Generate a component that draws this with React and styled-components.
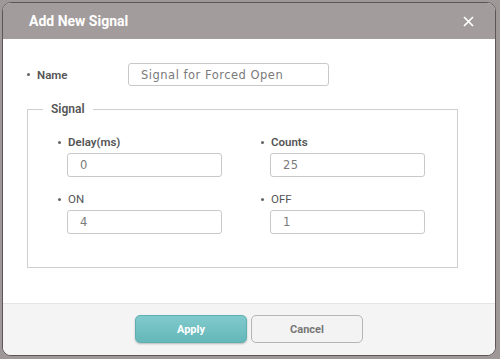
import React from "react";
import styled, { createGlobalStyle } from "styled-components";

const Global = createGlobalStyle`
  html, body {
    margin: 0;
    padding: 0;
    background: #9f9899;
    width: 500px;
    height: 359px;
    overflow: hidden;
  }
  body {
    padding: 2px 4px 0 2px;
    box-sizing: border-box;
  }
`;

const Dialog = styled.div`
  width: 494px;
  height: 354px;
  box-sizing: border-box;
  border: 1.5px solid #5d5557;
  border-radius: 9px;
  overflow: hidden;
  display: flex;
  flex-direction: column;
  background: #fff;
  font-family: Roboto, "Liberation Sans", sans-serif;
`;

const Header = styled.div`
  height: 36px;
  flex: none;
  background: #a39c9d;
  display: flex;
  align-items: center;
  justify-content: space-between;
  padding: 0 21px 0 26px;
`;

const Title = styled.h2`
  margin: 0;
  font-size: 14px;
  font-weight: 700;
  color: #fff;
`;

const Close = styled.button`
  border: 0;
  background: none;
  padding: 0;
  width: 11px;
  height: 11px;
  display: flex;
  cursor: pointer;
`;

const Body = styled.div`
  flex: 1;
  padding: 24px 37px 0 24px;
`;

const Row = styled.div`
  display: flex;
  align-items: center;
`;

const Label = styled.div`
  display: flex;
  align-items: center;
  font-size: 11.5px;
  font-weight: ${(p) => (p.$bold ? 600 : 400)};
  color: #555;
  width: ${(p) => p.$width || "auto"};
  margin-left: ${(p) => p.$indent || "0"};
  &::before {
    content: "";
    width: 3px;
    height: 3px;
    border-radius: 50%;
    background: #666;
    margin-right: 7px;
  }
`;

const Input = styled.input`
  box-sizing: border-box;
  width: ${(p) => p.$width};
  height: ${(p) => p.$height || "24px"};
  border: 1px solid #c9c9c9;
  border-radius: 3px;
  padding: 0 12px;
  font-family: "DejaVu Sans", Verdana, sans-serif;
  font-size: 11.5px;
  letter-spacing: 0.5px;
  color: #7a7a7a;
  background: #fff;
  outline: none;
`;

const Fieldset = styled.fieldset`
  margin: 16px 0 0 0;
  border: 1px solid #cfcfcf;
  padding: 19px 30px 32px 39px;
  height: 166px;
  box-sizing: border-box;
`;

const Legend = styled.legend`
  margin-left: -24px;
  padding: 0 8px;
  font-size: 12px;
  font-weight: 600;
  color: #555;
`;

const Grid = styled.div`
  display: grid;
  grid-template-columns: 155px 155px;
  column-gap: 48px;
  row-gap: 15px;
`;

const Field = styled.div`
  display: flex;
  flex-direction: column;
  gap: 4px;
`;

const Footer = styled.div`
  height: 52px;
  box-sizing: border-box;
  flex: none;
  background: #f4f4f4;
  border-top: 1px solid #e4e4e4;
  display: flex;
  justify-content: center;
  align-items: flex-start;
  padding-top: 11px;
  gap: 4px;
`;

const Button = styled.button`
  width: 112px;
  height: 28px;
  border-radius: 5px;
  font-family: Roboto, "Liberation Sans", sans-serif;
  font-size: 11px;
  font-weight: 700;
  cursor: pointer;
  border: 1px solid ${(p) => (p.$primary ? "#5fb0b2" : "#b5b5b5")};
  color: ${(p) => (p.$primary ? "#fff" : "#777")};
  background: ${(p) =>
    p.$primary ? "linear-gradient(#80cacc, #65b7b9)" : "#f3f3f3"};
  box-shadow: ${(p) => (p.$primary ? "0 1px 2px rgba(0,0,0,0.25)" : "none")};
`;

const fields = [
  { label: "Delay(ms)", value: "0", bold: true },
  { label: "Counts", value: "25", bold: true },
  { label: "ON", value: "4" },
  { label: "OFF", value: "1" },
];

export default function App() {
  return (
    <>
      <Global />
      <Dialog>
        <Header>
          <Title>Add New Signal</Title>
          <Close aria-label="close">
            <svg width="11" height="11" viewBox="0 0 11 11">
              <path d="M1 1L10 10M10 1L1 10" stroke="#fff" strokeWidth="1.7" />
            </svg>
          </Close>
        </Header>
        <Body>
          <Row>
            <Label $bold $width="101px">Name</Label>
            <Input $width="201px" $height="23px" defaultValue="Signal for Forced Open" />
          </Row>
          <Fieldset>
            <Legend>Signal</Legend>
            <Grid>
              {fields.map((f) => (
                <Field key={f.label}>
                  <Label $bold={f.bold} $indent="-9px">{f.label}</Label>
                  <Input $width="155px" defaultValue={f.value} />
                </Field>
              ))}
            </Grid>
          </Fieldset>
        </Body>
        <Footer>
          <Button $primary>Apply</Button>
          <Button>Cancel</Button>
        </Footer>
      </Dialog>
    </>
  );
}
